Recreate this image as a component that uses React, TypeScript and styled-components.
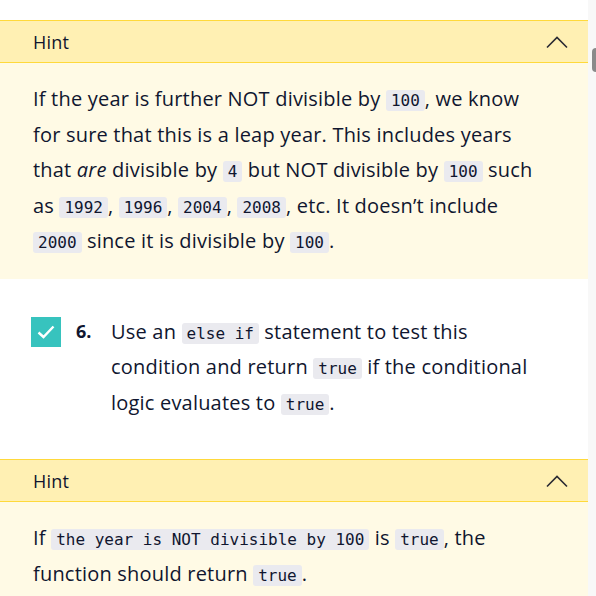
import React from "react";
import styled, { createGlobalStyle } from "styled-components";

const Global = createGlobalStyle`
  html, body { margin: 0; padding: 0; background: #fff; }
  body { font-family: "Open Sans", "Noto Sans", sans-serif; color: #10162f; }
`;

const Frame = styled.div`
  display: flex;
  width: 596px;
  height: 596px;
  overflow: hidden;
`;

const Content = styled.div`
  width: 588px;
  padding-top: 20px;
  display: flex;
  flex-direction: column;
`;

const Gutter = styled.div`
  width: 8px;
  background: #f8f8f8;
  display: flex;
  flex-direction: column;
  align-items: flex-end;
  padding-top: 48px;
`;

const Thumb = styled.div`
  width: 4px;
  height: 24px;
  background: #8a8a8a;
  border-radius: 4px 0 0 4px;
`;

const HintBox = styled.section`
  display: flex;
  flex-direction: column;
`;

const HintHeader = styled.div`
  display: flex;
  align-items: center;
  justify-content: space-between;
  height: 41px;
  padding: 0 20px 0 33px;
  background: #fff0b3;
  border-top: 1px solid #ffd93b;
  border-bottom: 1px solid #ffd93b;
  font-size: 18px;
  letter-spacing: 0.2px;
`;

const HintBody = styled.div<{ $pb: number }>`
  background: #fffae5;
  padding: 18px 43px ${(p) => p.$pb}px 33px;
  font-size: 20px;
  letter-spacing: 0.2px;
  line-height: 35.5px;
`;

const Code = styled.code`
  font-family: "DejaVu Sans Mono", monospace;
  font-size: 16px;
  letter-spacing: 0;
  line-height: 18px;
  background: #eaeaef;
  border-radius: 3px;
  padding: 1px 5px;
  color: #10162f;
`;

const Step = styled.div`
  display: flex;
  align-items: flex-start;
  padding: 35px 0 39px 31px;
`;

const Check = styled.div`
  width: 30px;
  height: 30px;
  flex: none;
  background: #37c3be;
  display: flex;
  align-items: center;
  justify-content: center;
  margin-top: 3px;
`;

const Num = styled.span`
  font-weight: 700;
  font-size: 18px;
  line-height: 35.5px;
  width: 35px;
  margin-left: 15px;
  flex: none;
`;

const StepText = styled.div`
  width: 440px;
  font-size: 20px;
  letter-spacing: 0.2px;
  line-height: 35.5px;
`;

const Chevron = () => (
  <svg width="22" height="14" viewBox="0 0 22 14" fill="none">
    <path d="M1 12.5 L11 2.5 L21 12.5" stroke="#2b2b33" strokeWidth="1.6" />
  </svg>
);

export default function App() {
  return (
    <Frame>
      <Global />
      <Content>
        <HintBox>
          <HintHeader>
            <span>Hint</span>
            <Chevron />
          </HintHeader>
          <HintBody $pb={20}>
            If the year is further NOT divisible by <Code>100</Code>, we know for sure that
            this is a leap year. This includes years that <em>are</em> divisible by{" "}
            <Code>4</Code> but NOT divisible by <Code>100</Code> such as <Code>1992</Code>,{" "}
            <Code>1996</Code>, <Code>2004</Code>, <Code>2008</Code>, etc. It doesn’t include{" "}
            <Code>2000</Code> since it is divisible by <Code>100</Code>.
          </HintBody>
        </HintBox>
        <Step>
          <Check>
            <svg width="18" height="14" viewBox="0 0 18 14" fill="none">
              <path d="M1.5 7.5 L6.5 12 L16.5 1.5" stroke="#fff" strokeWidth="2.4" />
            </svg>
          </Check>
          <Num>6.</Num>
          <StepText>
            Use an <Code>else if</Code> statement to test this condition and return{" "}
            <Code>true</Code> if the conditional logic evaluates to <Code>true</Code>.
          </StepText>
        </Step>
        <HintBox>
          <HintHeader>
            <span>Hint</span>
            <Chevron />
          </HintHeader>
          <HintBody $pb={20}>
            If <Code>the year is NOT divisible by 100</Code> is <Code>true</Code>, the
            function should return <Code>true</Code>.
          </HintBody>
        </HintBox>
      </Content>
      <Gutter>
        <Thumb />
      </Gutter>
    </Frame>
  );
}
